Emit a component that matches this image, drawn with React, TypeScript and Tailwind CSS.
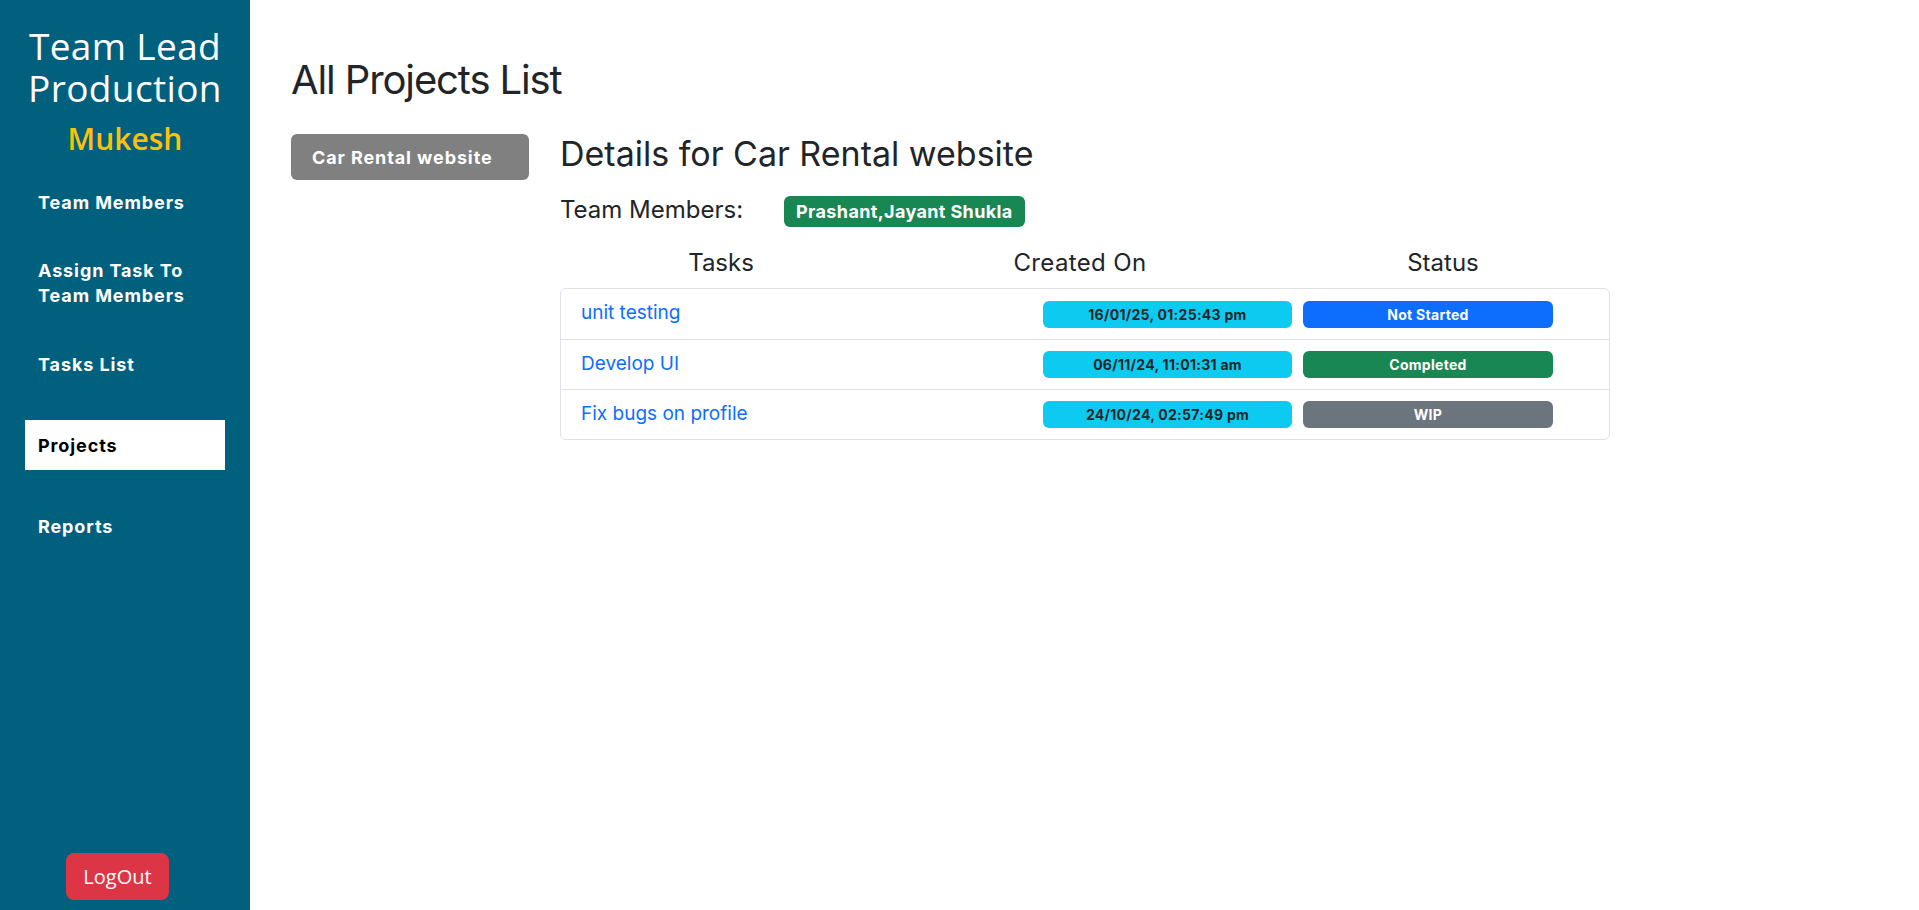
import React from 'react';

const body = { fontFamily: 'Inter, "Noto Sans", sans-serif' };
const brand = { fontFamily: '"Open Sans", Inter, sans-serif' };

const navItems = ['Team Members', 'Assign Task To Team Members', 'Tasks List', 'Projects', 'Reports'];

const tasks = [
  { name: 'unit testing', created: '16/01/25, 01:25:43 pm', status: 'Not Started', color: 'bg-[#0d6efd]' },
  { name: 'Develop UI', created: '06/11/24, 11:01:31 am', status: 'Completed', color: 'bg-[#198754]' },
  { name: 'Fix bugs on profile', created: '24/10/24, 02:57:49 pm', status: 'WIP', color: 'bg-[#6c757d]' },
];

const Sidebar = () => (
  <aside className="w-[250px] shrink-0 h-[910px] bg-[#02607f] flex flex-col">
    <div style={brand} className="pt-[25px] text-center">
      <h1 className="text-white text-[37px] leading-[41.5px] font-medium tracking-[0.01em]">
        Team Lead
        <br />
        Production
      </h1>
      <div className="mt-[13px] text-[#ffc107] text-[30px] leading-[36px] font-semibold">Mukesh</div>
    </div>

    <nav className="mt-[20px] px-[25px] flex flex-col gap-[31px]">
      {navItems.map((item) => {
        const active = item === 'Projects';
        return (
          <a
            key={item}
            href="#"
            className={`h-[50px] flex items-center px-[13px] text-[18px] leading-[25px] font-bold tracking-[0.05em] ${
              active ? 'bg-white text-black' : 'text-white'
            }`}
          >
            {item === 'Assign Task To Team Members' ? (
              <span>
                Assign Task To
                <br />
                Team Members
              </span>
            ) : (
              item
            )}
          </a>
        );
      })}
    </nav>

    <div className="mt-auto mb-[10px] pl-[66px]">
      <button
        style={brand}
        className="w-[103px] h-[47px] rounded-lg bg-[#dc3545] text-white text-[20px]"
      >
        LogOut
      </button>
    </div>
  </aside>
);

const TaskTable = () => (
  <div>
    <div className="grid grid-cols-3 text-[24px] leading-[29px] text-[#212529] text-center pt-[21px] pb-[11px]">
      <div className="pr-[28px]">Tasks</div>
      <div className="pr-[10px] tracking-[0.015em]">Created On</div>
      <div className="pl-[16px]">Status</div>
    </div>
    <div className="border border-[#dee2e6] rounded-md">
      {tasks.map((t, i) => (
        <div
          key={t.name}
          className={`h-[50px] flex items-center pl-[20px] pr-[56px] ${i > 0 ? 'border-t border-[#dee2e6]' : ''}`}
        >
          <a href="#" className="flex-1 text-[#0d6efd] text-[19px] -mt-[1px]">
            {t.name}
          </a>
          <span className="w-[249px] h-[27px] rounded-md bg-[#0dcaf0] text-[#212529] text-[14px] font-bold tracking-[0.02em] flex items-center justify-center">
            {t.created}
          </span>
          <span
            className={`ml-[11px] w-[250px] h-[27px] rounded-md ${t.color} text-white text-[14px] font-bold tracking-[0.02em] flex items-center justify-center`}
          >
            {t.status}
          </span>
        </div>
      ))}
    </div>
  </div>
);

export default function App() {
  return (
    <div style={body} className="flex min-h-screen bg-white">
      <Sidebar />
      <main className="flex-1 pl-[41px] pt-[56px]">
        <h1 className="text-[40px] leading-[48px] text-[#212529] tracking-[-0.028em]">All Projects List</h1>
        <div className="mt-[30px] flex">
          <div className="w-[269px] shrink-0">
            <button className="w-[238px] h-[46px] rounded-md bg-[#808080] text-white text-[18px] font-bold tracking-[0.05em] text-left pl-[21px]">
              Car Rental website
            </button>
          </div>
          <div className="w-[1050px]">
            <h2 className="text-[34px] leading-[38px] text-[#212529] mt-[1px]">Details for Car Rental website</h2>
            <div className="mt-[23px] flex items-center">
              <span className="text-[24px] leading-[29px] text-[#212529] -mt-[4px]">Team Members:</span>
              <span className="ml-[41px] h-[31px] px-[12px] rounded-md bg-[#198754] text-white text-[18px] font-bold tracking-[0.02em] flex items-center">
                Prashant,Jayant Shukla
              </span>
            </div>
            <TaskTable />
          </div>
        </div>
      </main>
    </div>
  );
}
